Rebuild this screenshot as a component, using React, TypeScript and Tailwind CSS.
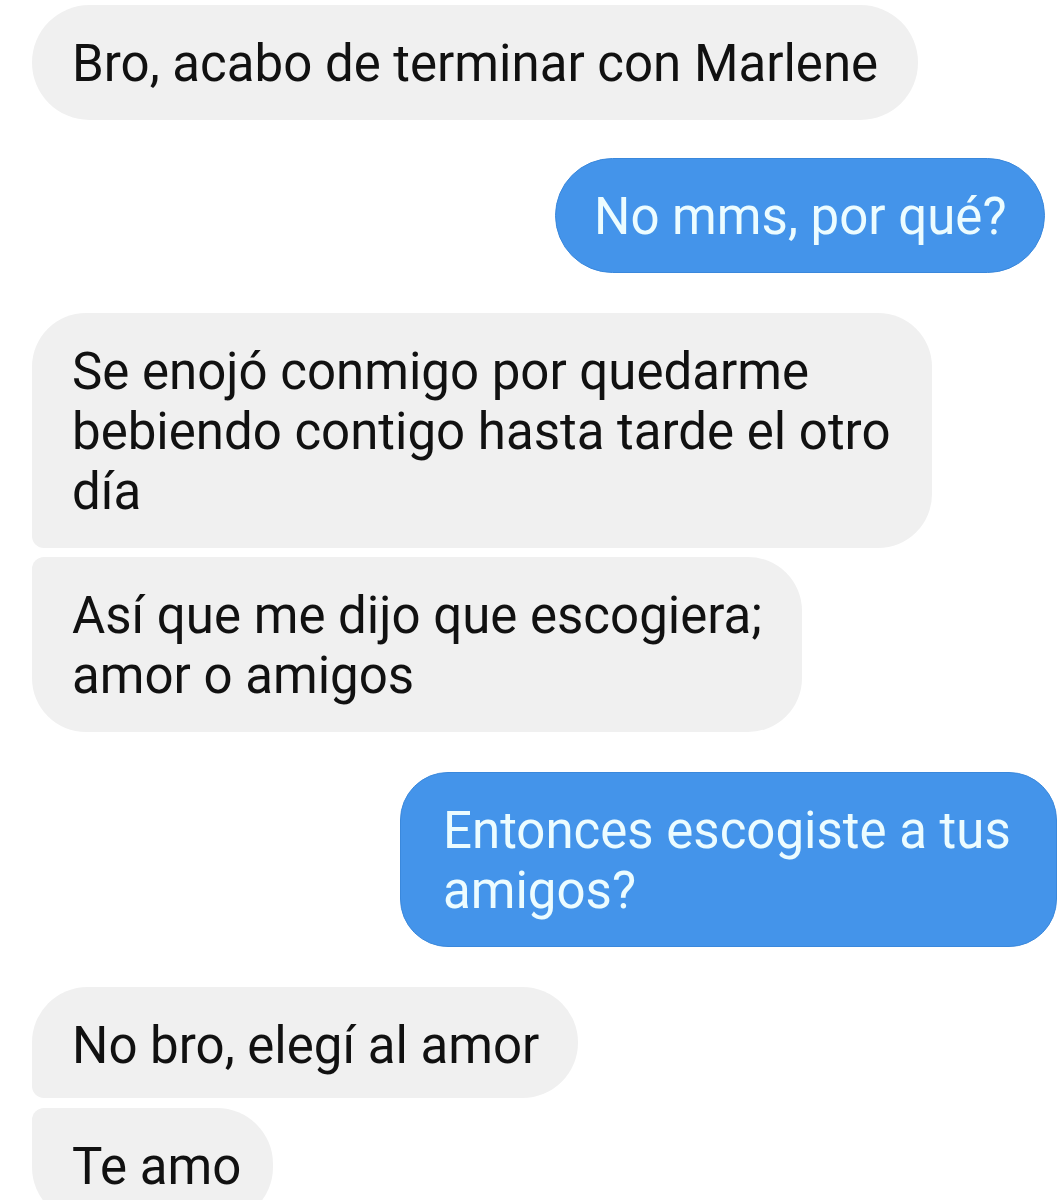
import React from "react";

const font = { fontFamily: "Roboto, 'Noto Sans', Arial, sans-serif" };

export default function App() {
  return (
    <div
      className="w-[1061px] h-[1200px] overflow-hidden bg-white flex flex-col items-start text-[51px] leading-[60px] text-[#111111]"
      style={font}
    >
      {/* 1 */}
      <div className="mt-[5px] ml-[32px] w-[886px] rounded-[58px] bg-[#f0f0f0] pl-[40px] pt-[29px] pb-[26px] whitespace-nowrap">
        Bro, acabo de terminar con Marlene
      </div>

      {/* 2 */}
      <div className="mt-[38px] self-end mr-[16px] w-[490px] rounded-[58px] bg-[#4494ea] border border-[#3a88dc] text-[#ecfcff] pl-[38px] pt-[28px] pb-[25px] whitespace-nowrap">
        No mms, por qué?
      </div>

      {/* 3 */}
      <div className="mt-[40px] ml-[32px] w-[900px] rounded-tl-[54px] rounded-tr-[54px] rounded-br-[54px] rounded-bl-[12px] bg-[#f0f0f0] pl-[40px] pt-[29px] pb-[26px] whitespace-nowrap">
        Se enojó conmigo por quedarme
        <br />
        bebiendo contigo hasta tarde el otro
        <br />
        día
      </div>

      {/* 4 */}
      <div className="mt-[9px] ml-[32px] w-[770px] rounded-tl-[12px] rounded-tr-[54px] rounded-br-[54px] rounded-bl-[54px] bg-[#f0f0f0] pl-[40px] pt-[29px] pb-[26px] whitespace-nowrap">
        Así que me dijo que escogiera;
        <br />
        amor o amigos
      </div>

      {/* 5 */}
      <div className="mt-[40px] self-end mr-[4px] w-[657px] rounded-[48px] bg-[#4494ea] border border-[#3a88dc] text-[#ecfcff] pl-[42px] pt-[28px] pb-[25px] whitespace-nowrap">
        Entonces escogiste a tus
        <br />
        amigos?
      </div>

      {/* 6 */}
      <div className="mt-[40px] ml-[32px] w-[546px] rounded-tl-[56px] rounded-tr-[56px] rounded-br-[56px] rounded-bl-[12px] bg-[#f0f0f0] pl-[40px] pt-[29px] pb-[22px] whitespace-nowrap">
        No bro, elegí al amor
      </div>

      {/* 7 */}
      <div className="mt-[10px] ml-[32px] w-[241px] rounded-tl-[12px] rounded-tr-[56px] rounded-br-[56px] rounded-bl-[56px] bg-[#f0f0f0] pl-[40px] pt-[29px] pb-[26px] whitespace-nowrap">
        Te amo
      </div>
    </div>
  );
}
